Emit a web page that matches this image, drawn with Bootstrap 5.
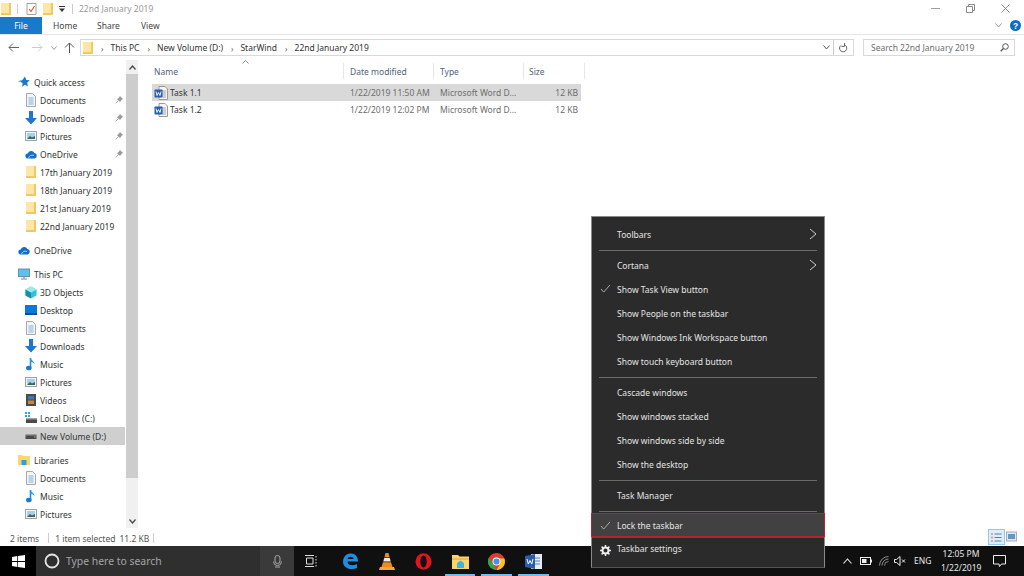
<!DOCTYPE html>
<html lang="en">
<head>
<meta charset="utf-8">
<title>22nd January 2019</title>
<link rel="stylesheet" href="https://cdn.jsdelivr.net/npm/bootstrap@5.3.0/dist/css/bootstrap.min.css">
<style>
html,body{height:576px;overflow:hidden}
body{font-family:"Noto Sans","Open Sans","Liberation Sans",sans-serif;font-size:8.5px;line-height:1;color:#333;background:#fff;width:1024px}
svg{display:block;flex:none}
.defs-holder{position:absolute;width:0;height:0}
.shell{height:576px}
.titlebar{height:17px;padding-left:1px}
.titletext{color:#9a9a9a;margin-left:6px}
.vsep{width:1px;height:10px;background:#ccc}
.vsep-tall{height:15px;margin:0 3px 0 3px}
.mark-l6{margin-left:6px}
.mark-l7{margin-left:7px}
.mark-l8{margin-left:8px}
.mark-l12{margin-left:12px}
.winbtn{width:35px}
.winbtn.lastwin{width:23px}
.tabstrip{height:18px;border-bottom:1px solid #e6e6e6}
.tabfile{width:42px;height:17px;background:#1979ca;color:#fff;justify-content:center}
.tabitem{color:#444;margin-left:11px;width:33px}
.tabright{margin-right:3px}
.addr{height:25px}
.navzone{width:80px;padding-left:8px}
.addrbox{height:17px;width:774px;border:1px solid #d9d9d9;padding-left:2px;color:#333}
.crumb{color:#666;font-size:8px;margin:0 7px 0 8px}
.refresh{margin:0 5px 0 2px}
.searchbox{height:17px;width:152px;border:1px solid #d9d9d9;margin-left:9px;margin-right:9px;padding:0 5px 0 7px;color:#6d6d6d}
.content{height:470px;min-height:0}
.sidenav{width:126px;padding-top:13px;overflow:hidden}
.navrow{height:18px;gap:4px;color:#333;padding-left:18px}
.navrow.kid{padding-left:25px;gap:3px}
.navrow.gap{margin-top:6px}
.navrow.cur{background:#cfcfcf;margin-right:1px}
.pin{position:absolute;left:115px;top:5px}
.sbar{width:12px;background:#f0f0f0;height:468px}
.sbthumb{height:404px;background:#cdcdcd}
.sbend{height:14px}
.filepane{width:886px;padding-left:14px}
.colgrid{display:grid;grid-template-columns:192px 90px 90px 57px;width:429px}
.headrow{height:24px;padding-top:3px;color:#51627a;position:relative}
.headcell{height:16px;padding-left:6px;border-right:1px solid #e5e5e5}
.headcell.firsth{padding-left:2px}
.headcell.lastc{width:61px;padding-left:5px}
.sortmark{position:absolute;left:90px;top:0}
.filerow{height:17px;color:#6d6d6d}
.filerow.sel{background:#d9d9d9}
.fname{color:#333;gap:2px;padding-left:2px}
.fcell{padding-left:6px}
.fsize{justify-content:flex-end;padding-right:3px}
.statusline{height:16px;color:#555;padding-left:10px;position:relative}
.statsep{margin:0 6px 0 9px}
.viewbtn{position:absolute;top:-1px;height:16px;width:17px;border:1px solid #8fcbee;background:#d9effb;left:988px;display:flex;align-items:center;justify-content:center}
.viewbtn2{position:absolute;top:1px;left:1006px}
.taskstrip{height:30px;background:#101010;color:#eee;position:relative}
.startcell{width:36px;height:30px;background:#000;justify-content:center}
.searchcell{width:258px;height:30px;background:#2f2f2f;padding-left:8px;color:#a5a5a5;font-size:10.4px;gap:6px}
.micbox{margin-left:auto;width:34px;height:30px;background:#3a3a3a;justify-content:center}
.appcell{width:36.6px;height:30px;justify-content:center;position:relative}
.appcell.tview{width:34px}
.appgap{width:4px}
.running::after{content:"";position:absolute;left:3px;right:3px;bottom:0;height:2px;background:#76b9ed}
.tray{margin-left:auto;height:30px;color:#e8e8e8}
.tr-chev{margin-right:8px}
.tr-batt{margin-right:7px}
.tr-wifi{margin-right:4px}
.tr-vol{margin-right:8px}
.tr-eng{width:19px;margin-right:8px}
.clock{text-align:center;line-height:14px;width:40px}
.tr-note{margin:0 18px 0 12px}
.ctxmenu{position:absolute;left:591px;top:216px;width:234px;height:352px;background:#2b2b2b;border:1px solid #8a8a8a;border-bottom-color:#555;padding:5px 0 0;color:#e4e4e4;z-index:5}
.ctxrow{height:24px;padding-left:25px;position:relative}
.ctxrow svg.lead{position:absolute;left:8px;top:7px}
.ctxrow svg.arrow{position:absolute;right:7px;top:6px}
.ctxsep{height:7px;padding:4px 7px 2px 7px}
.ctxsep.shortsep{height:6px;padding-bottom:1px}
.ctxsep i{display:block;height:1px;background:#6a6a6a}
.ctxrow.lockrow{background:#414141;box-shadow:inset 0 0 0 1px #b4232f;height:24px;margin:0 -1px;padding-left:26px}
.ctxrow.lockrow svg.lead{left:9px;top:8px}
.ctxrow.afterlock{box-shadow:0 -1px 0 #b4232f;margin-top:1px;height:23px}
/* Noto Sans at 8.5px rounds its ascent down: drop the text one pixel back onto the row's centre line */
.navrow>span,.fname>span,.fcell,.fsize,.headcell,.ctxrow,.tabfile,.tabitem,.titletext,.addrbox>span:not(.ms-auto),.searchbox>span,.statusline>.stattext{padding-top:2px}
.ctxrow.afterlock{padding-top:0}
</style>
</head>
<body>
<svg class="defs-holder" width="0" height="0">
<defs>
<symbol id="folder" viewBox="0 0 10 12"><path d="M0 0h10v12H0z" fill="#fbe199"/><path d="M0 0h8v10H0z" fill="#fde6a6"/><path d="M8 0h2v12H0v-2h8z" fill="#f3c95f"/></symbol>
<symbol id="doc" viewBox="0 0 12 14"><path d="M1.500.5h6l3 3v10h-9z" fill="#f2f4f6" stroke="#a8a8a8"/><path d="M3.500 5h5M3.500 7h5M3.500 9h5M3.500 11h5" stroke="#7fb4dc"/></symbol>
<symbol id="down" viewBox="0 0 12 14"><path d="M4 0h4v7h4L6 13.500 0 7h4z" fill="#1a78d1"/></symbol>
<symbol id="pic" viewBox="0 0 12 12"><rect x=".5" y="1.500" width="11" height="9" fill="#f3f6f8" stroke="#9aa3ab"/><rect x="2" y="3" width="8" height="6" fill="#a9d0ea"/><path d="M2 9l3-3 2 1.500L10 6v3z" fill="#3a6a54"/></symbol>
<symbol id="cloud" viewBox="0 0 12 9"><path d="M3 8.500a2.500 2.500 0 0 1-.3-5A3.600 3.600 0 0 1 9.400 3a2.800 2.800 0 0 1 .2 5.500z" fill="#0f6fc9"/><path d="M3.500 8c1-2.500 3-3.500 5.500-2.500" fill="none" stroke="#fff" stroke-width=".7"/></symbol>
<symbol id="pinico" viewBox="0 0 8 8"><path d="M5 .5L7.500 3 6.300 3.600 5 5.500 2.500 3 4.400 1.700zM3.500 4.500L.7 7.300" fill="#9a9a9a" stroke="#8a8a8a" stroke-width=".7"/></symbol>
<symbol id="music" viewBox="0 0 12 14"><path d="M5.500 1v9.500" stroke="#1a8fe3" stroke-width="1.600"/><ellipse cx="3.800" cy="11" rx="2.800" ry="2.300" fill="#1a78d1"/><path d="M5.500 1c1 3 4.500 3 3.800 6.500C9 5.500 7 5 5.500 5z" fill="#2b9fef"/></symbol>
<symbol id="drive" viewBox="0 0 12 8"><rect x=".5" y="3" width="11" height="4" fill="#4a4a4a"/><rect x=".5" y="2" width="11" height="1.500" fill="#9a9a9a"/><rect x="9" y="4.500" width="1.500" height="1" fill="#8fd14f"/></symbol>
<symbol id="wordfile" viewBox="0 0 14 14"><path d="M5 .5h6l2.500 2.500v10.500H5z" fill="#f4f4f4" stroke="#9a9a9a"/><path d="M8 5h4M8 7h4M8 9h4M8 11h4" stroke="#a8a8a8"/><rect x=".5" y="3.500" width="8" height="8" rx=".7" fill="#2b5ea8"/><path d="M2 5.500l1 4 1.500-3 1.500 3 1-4" fill="none" stroke="#fff" stroke-width=".9"/></symbol>
<symbol id="check" viewBox="0 0 12 10"><path d="M1 5.500L4 9l7-8" fill="none" stroke="#b9b9b9"/></symbol>
<symbol id="chev" viewBox="0 0 8 12"><path d="M1 1l6 5-6 5" fill="none" stroke="#cfcfcf" stroke-width="1"/></symbol>
</defs>
</svg>
<div class="shell d-flex flex-column">
  <div class="titlebar d-flex align-items-center">
    <svg width="10" height="12"><use href="#folder"/></svg>
    <span class="vsep mark-l6"></span>
    <svg class="mark-l8" width="11" height="12" viewBox="0 0 11 12"><path d="M1 .5h9v11H1z" fill="#fff" stroke="#a0a0a0"/><path d="M3 6l2 2.500L8.500 3" fill="none" stroke="#e0592a" stroke-width="1.200"/></svg>
    <svg class="mark-l6" width="10" height="12"><use href="#folder"/></svg>
    <svg class="mark-l6" width="6" height="6" viewBox="0 0 6 6"><path d="M0 0h6v1H0zM0 2.500h6L3 6z" fill="#333"/></svg>
    <span class="vsep mark-l7"></span>
    <span class="titletext">22nd January 2019</span>
    <span class="ms-auto d-flex align-items-center">
      <span class="winbtn"><svg width="9" height="9" viewBox="0 0 9 9"><path d="M0 4.500h9" stroke="#a0a0a0"/></svg></span>
      <span class="winbtn"><svg width="9" height="9" viewBox="0 0 9 9"><path d="M.5 2.500h6v6h-6zM2.500 2.500v-2h6v6h-2" fill="none" stroke="#8a8a8a"/></svg></span>
      <span class="winbtn lastwin"><svg width="9" height="9" viewBox="0 0 9 9"><path d="M.5.500l8 8M8.500.500l-8 8" stroke="#8a8a8a"/></svg></span>
    </span>
  </div>
  <div class="tabstrip d-flex align-items-start">
    <span class="tabfile d-flex align-items-center">File</span>
    <span class="tabitem align-self-center">Home</span>
    <span class="tabitem align-self-center">Share</span>
    <span class="tabitem align-self-center">View</span>
    <span class="tabright ms-auto d-flex align-items-center gap-2 align-self-center">
      <svg width="7" height="5" viewBox="0 0 7 5"><path d="M.5.500L3.500 4l3-3.500" fill="none" stroke="#999"/></svg>
      <svg width="11" height="11" viewBox="0 0 11 11"><circle cx="5.500" cy="5.500" r="5.500" fill="#0f6cc4"/><text x="5.500" y="8.500" font-size="8.500" font-weight="700" text-anchor="middle" fill="#fff" font-family="Liberation Sans">?</text></svg>
    </span>
  </div>
  <div class="addr d-flex align-items-center">
    <div class="navzone d-flex align-items-center">
      <svg width="12" height="9" viewBox="0 0 12 9"><path d="M11 4.500H1M5 .5l-4 4 4 4" fill="none" stroke="#666"/></svg>
      <svg class="mark-l12" width="11" height="9" viewBox="0 0 11 9"><path d="M0 4.500h10M6 .5l4 4-4 4" fill="none" stroke="#ccc"/></svg>
      <svg class="mark-l8" width="6" height="4" viewBox="0 0 6 4"><path d="M.5.500L3 3.500 5.500.5" fill="none" stroke="#999"/></svg>
      <svg class="mark-l7" width="11" height="11" viewBox="0 0 11 11"><path d="M5.500 11V1M1 5.500l4.500-4.500 4.500 4.500" fill="none" stroke="#555"/></svg>
    </div>
    <div class="addrbox d-flex align-items-center">
      <svg width="10" height="12"><use href="#folder"/></svg>
      <span class="crumb">&rsaquo;</span><span>This PC</span>
      <span class="crumb">&rsaquo;</span><span>New Volume (D:)</span>
      <span class="crumb">&rsaquo;</span><span>StarWind</span>
      <span class="crumb">&rsaquo;</span><span>22nd January 2019</span>
      <span class="ms-auto d-flex align-items-center h-100">
        <svg width="7" height="5" viewBox="0 0 7 5"><path d="M.5.500L3.500 4l3-3.500" fill="none" stroke="#555"/></svg>
        <span class="vsep vsep-tall"></span>
        <svg class="refresh" width="9" height="10" viewBox="0 0 9 10"><path d="M2 2.300A3.600 3.600 0 1 0 5 1.700" fill="none" stroke="#666"/><path d="M5.500 0v3.400H2.500" fill="none" stroke="#666"/></svg>
      </span>
    </div>
    <div class="searchbox d-flex align-items-center justify-content-between">
      <span>Search 22nd January 2019</span>
      <svg width="9" height="9" viewBox="0 0 9 9"><circle cx="5.500" cy="3.500" r="2.800" fill="none" stroke="#555"/><path d="M3.500 5.500L.7 8.300" stroke="#555" stroke-width="1.300"/></svg>
    </div>
  </div>
  <div class="content d-flex">
    <nav class="sidenav">
      <div class="navrow d-flex align-items-center"><svg width="12" height="12" viewBox="0 0 12 12"><path d="M7 .5l1.300 3.400 3.500.4-2.600 2.400.7 3.700L7 8.700l-3 2.100.7-3.400L2.500 5.500 0 6l1.500-1.300 2.700-.5z" fill="#1a78d1"/></svg><span>Quick access</span></div>
      <div class="navrow kid d-flex align-items-center position-relative"><svg width="12" height="14"><use href="#doc"/></svg><span>Documents</span><svg class="pin" width="8" height="8"><use href="#pinico"/></svg></div>
      <div class="navrow kid d-flex align-items-center position-relative"><svg width="12" height="14"><use href="#down"/></svg><span>Downloads</span><svg class="pin" width="8" height="8"><use href="#pinico"/></svg></div>
      <div class="navrow kid d-flex align-items-center position-relative"><svg width="12" height="12"><use href="#pic"/></svg><span>Pictures</span><svg class="pin" width="8" height="8"><use href="#pinico"/></svg></div>
      <div class="navrow kid d-flex align-items-center position-relative"><svg width="12" height="9"><use href="#cloud"/></svg><span>OneDrive</span><svg class="pin" width="8" height="8"><use href="#pinico"/></svg></div>
      <div class="navrow kid d-flex align-items-center"><svg width="12" height="12"><use href="#folder"/></svg><span>17th January 2019</span></div>
      <div class="navrow kid d-flex align-items-center"><svg width="12" height="12"><use href="#folder"/></svg><span>18th January 2019</span></div>
      <div class="navrow kid d-flex align-items-center"><svg width="12" height="12"><use href="#folder"/></svg><span>21st January 2019</span></div>
      <div class="navrow kid d-flex align-items-center"><svg width="12" height="12"><use href="#folder"/></svg><span>22nd January 2019</span></div>
      <div class="navrow gap d-flex align-items-center"><svg width="12" height="9"><use href="#cloud"/></svg><span>OneDrive</span></div>
      <div class="navrow gap d-flex align-items-center"><svg width="12" height="12" viewBox="0 0 12 12"><rect x=".5" y="1" width="11" height="7.500" fill="#5cc0f0" stroke="#6b8fa8"/><path d="M3 11h6M6 8.500V11" stroke="#7a8a96"/></svg><span>This PC</span></div>
      <div class="navrow kid d-flex align-items-center"><svg width="12" height="13" viewBox="0 0 12 13"><path d="M6 .5l5.500 3v6L6 12.500.5 9.500v-6z" fill="#2ec4d6"/><path d="M6 6.500v6L.5 9.500v-6z" fill="#1a8f9f"/><path d="M6 .5l5.500 3L6 6.500.5 3.500z" fill="#9ee8ee"/></svg><span>3D Objects</span></div>
      <div class="navrow kid d-flex align-items-center"><svg width="12" height="10" viewBox="0 0 12 10"><rect width="12" height="9" fill="#0f78d4"/><rect y="8" width="12" height="2" fill="#0a4f8f"/></svg><span>Desktop</span></div>
      <div class="navrow kid d-flex align-items-center"><svg width="12" height="14"><use href="#doc"/></svg><span>Documents</span></div>
      <div class="navrow kid d-flex align-items-center"><svg width="12" height="14"><use href="#down"/></svg><span>Downloads</span></div>
      <div class="navrow kid d-flex align-items-center"><svg width="12" height="14"><use href="#music"/></svg><span>Music</span></div>
      <div class="navrow kid d-flex align-items-center"><svg width="12" height="12"><use href="#pic"/></svg><span>Pictures</span></div>
      <div class="navrow kid d-flex align-items-center"><svg width="12" height="12" viewBox="0 0 12 12"><rect x="1" width="10" height="12" fill="#4a4a4a"/><rect x="3" y="2" width="6" height="3.500" fill="#3a78b8"/><rect x="3" y="6.500" width="6" height="3.500" fill="#c98a2a"/></svg><span>Videos</span></div>
      <div class="navrow kid d-flex align-items-center"><svg width="12" height="12" viewBox="0 0 12 12"><path d="M0 0h2v2H0zM3 0h2v2H3zM0 3h2v2H0zM3 3h2v2H3z" fill="#27a9e0"/><rect x="1" y="7" width="11" height="4" fill="#4a4a4a"/><rect x="1" y="6" width="11" height="1.500" fill="#a0a0a0"/></svg><span>Local Disk (C:)</span></div>
      <div class="navrow kid cur d-flex align-items-center"><svg width="12" height="8"><use href="#drive"/></svg><span>New Volume (D:)</span></div>
      <div class="navrow gap d-flex align-items-center"><svg width="12" height="12" viewBox="0 0 12 12"><path d="M0 1h4l1 1h7v9H0z" fill="#fcd667"/><rect x="3.500" y="6" width="5" height="5" fill="#2b9fe0"/></svg><span>Libraries</span></div>
      <div class="navrow kid d-flex align-items-center"><svg width="12" height="14"><use href="#doc"/></svg><span>Documents</span></div>
      <div class="navrow kid d-flex align-items-center"><svg width="12" height="14"><use href="#music"/></svg><span>Music</span></div>
      <div class="navrow kid d-flex align-items-center"><svg width="12" height="12"><use href="#pic"/></svg><span>Pictures</span></div>
    </nav>
    <div class="sbar d-flex flex-column">
      <div class="sbend d-flex align-items-center justify-content-center"><svg width="7" height="5" viewBox="0 0 7 5"><path d="M.5 4.500L3.500 1l3 3.500" fill="none" stroke="#444" stroke-width="1.200"/></svg></div>
      <div class="sbthumb"></div>
      <div class="flex-grow-1"></div>
      <div class="sbend d-flex align-items-center justify-content-center"><svg width="7" height="5" viewBox="0 0 7 5"><path d="M.5.500L3.500 4l3-3.500" fill="none" stroke="#444" stroke-width="1.200"/></svg></div>
    </div>
    <div class="filepane">
      <div class="headrow colgrid">
        <svg class="sortmark" width="7" height="4" viewBox="0 0 7 4"><path d="M.5 3.500L3.500.5l3 3" fill="none" stroke="#8a8a8a"/></svg>
        <div class="headcell firsth d-flex align-items-center">Name</div>
        <div class="headcell d-flex align-items-center">Date modified</div>
        <div class="headcell d-flex align-items-center">Type</div>
        <div class="headcell lastc d-flex align-items-center">Size</div>
      </div>
      <div class="filerow sel colgrid align-items-center">
        <div class="fname d-flex align-items-center"><svg width="14" height="14"><use href="#wordfile"/></svg><span>Task 1.1</span></div>
        <div class="fcell">1/22/2019 11:50 AM</div>
        <div class="fcell">Microsoft Word D...</div>
        <div class="fsize d-flex">12 KB</div>
      </div>
      <div class="filerow colgrid align-items-center">
        <div class="fname d-flex align-items-center"><svg width="14" height="14"><use href="#wordfile"/></svg><span>Task 1.2</span></div>
        <div class="fcell">1/22/2019 12:02 PM</div>
        <div class="fcell">Microsoft Word D...</div>
        <div class="fsize d-flex">12 KB</div>
      </div>
    </div>
  </div>
  <div class="statusline d-flex align-items-center">
    <span class="stattext">2 items</span>
    <span class="vsep statsep"></span>
    <span class="stattext">1 item selected</span>
    <span class="stattext ms-1">11.2 KB</span>
    <span class="vsep ms-1"></span>
    <span class="viewbtn"><svg width="13" height="11" viewBox="0 0 13 11"><path d="M1 1h2v2H1zM1 4.500h2v2H1zM1 8h2v2H1z" fill="#e8a0a0"/><path d="M4.500 2h7M4.500 5.500h7M4.500 9h7" stroke="#6a7a88"/></svg></span>
    <span class="viewbtn2"><svg width="11" height="11" viewBox="0 0 11 11"><rect x=".5" y="1" width="10" height="9" fill="#e6e6e6" stroke="#aab"/><rect x="2" y="3" width="7" height="5" fill="#5a9ac8"/></svg></span>
  </div>
  <div class="taskstrip d-flex align-items-center">
    <div class="startcell d-flex align-items-center"><svg width="13" height="13" viewBox="0 0 13 13"><path d="M0 1.900l5.300-.8v5H0zM6 1l7-1v6.100H6zM0 6.900h5.300v5L0 11.100zM6 6.900h7V13l-7-1z" fill="#fff"/></svg></div>
    <div class="searchcell d-flex align-items-center">
      <svg width="16" height="16" viewBox="0 0 16 16"><circle cx="8" cy="8" r="6.500" fill="none" stroke="#e6e6e6" stroke-width="1.800"/></svg>
      <span>Type here to search</span>
      <span class="micbox d-flex align-items-center"><svg width="9" height="13" viewBox="0 0 9 13"><rect x="2" y=".5" width="5" height="8" rx="2.500" fill="none" stroke="#a8a8a8"/><path d="M.5 6.500a4 4 0 0 0 8 0M2 12h5" fill="none" stroke="#a8a8a8"/></svg></span>
    </div>
    <div class="appcell tview d-flex align-items-center"><svg width="12" height="12" viewBox="0 0 12 12"><path d="M1.500 3h6.500v6H1.500zM0 .5h9M0 11.500h9M11 1v1.500M11 4v1.500M11 7v1.500M11 10v1.500" fill="none" stroke="#ddd"/></svg></div>
    <div class="appgap"></div>
    <div class="appcell d-flex align-items-center"><svg width="17" height="17" viewBox="0 0 17 17"><path d="M1 9C1 3 5 .5 9 .5c4.500 0 7 3.500 7 8H5.500c0 4 5.500 5 9.500 2.500v4c-5 2.500-14 1-14-6.500zM5.500 6h6c0-3-5.500-3-6 0z" fill="#1a8fe3"/></svg></div>
    <div class="appcell d-flex align-items-center"><svg width="16" height="17" viewBox="0 0 16 17"><path d="M6.500 0h3l1 4h-5z" fill="#f08a1d"/><path d="M5.300 4.800h5.400l1 3.700H4.300z" fill="#eee"/><path d="M4 9.200h8l1.500 4.800h-11z" fill="#f08a1d"/><path d="M1 14h14l1 3H0z" fill="#f4a53a"/></svg></div>
    <div class="appcell d-flex align-items-center"><svg width="17" height="17" viewBox="0 0 17 17"><ellipse cx="8.500" cy="8.500" rx="8" ry="8.300" fill="#e0141c"/><ellipse cx="8.500" cy="8.500" rx="3.200" ry="6" fill="#101010"/></svg></div>
    <div class="appcell running d-flex align-items-center"><svg width="17" height="15" viewBox="0 0 17 15"><path d="M0 1h6l1.500 1.500H17V15H0z" fill="#fcd667"/><path d="M0 4h17v2H0z" fill="#e8bd52"/><path d="M5 9l3.500-2.500L12 9v5H5z" fill="#3db4e6"/></svg></div>
    <div class="appcell running d-flex align-items-center"><svg width="17" height="17" viewBox="0 0 17 17"><circle cx="8.500" cy="8.500" r="8.500" fill="#dc3d33"/><path d="M8.500 17a8.500 8.500 0 0 1-7.400-12.700L5 11z" fill="#30a64a"/><path d="M8.500 17A8.500 8.500 0 0 0 16.400 5.500H8.500L11.500 12z" fill="#f9c31a"/><circle cx="8.500" cy="8.500" r="4" fill="#fff"/><circle cx="8.500" cy="8.500" r="3.100" fill="#4b8cf0"/></svg></div>
    <div class="appcell running d-flex align-items-center"><svg width="17" height="15" viewBox="0 0 17 15"><path d="M6 0h11v15H6z" fill="#e6edf6"/><path d="M9 4h6M9 7h6M9 10h6" stroke="#5a82b8"/><path d="M0 2l10-2v15L0 13z" fill="#2b5ea8"/><path d="M2 5l1.300 5 1.700-3.500L6.700 10 8 5" fill="none" stroke="#fff"/></svg></div>
    <div class="tray d-flex align-items-center">
      <svg class="tr-chev" width="9" height="6" viewBox="0 0 9 6"><path d="M.5 5.500l4-4.500 4 4.500" fill="none" stroke="#eee" stroke-width="1.100"/></svg>
      <svg class="tr-batt" width="12" height="8" viewBox="0 0 12 8"><rect x=".5" y=".5" width="10" height="7" fill="none" stroke="#eee"/><rect x="2" y="2" width="4.500" height="4" fill="#eee"/><path d="M11 2.500h1v3h-1z" fill="#eee"/></svg>
      <svg class="tr-wifi" width="11" height="10" viewBox="0 0 11 10"><path d="M.5 9.500A9 9 0 0 1 9.500.5M3 9.500A6.500 6.500 0 0 1 9.500 3M5.500 9.500a4 4 0 0 1 4-4" fill="none" stroke="#8a8a8a"/></svg>
      <svg class="tr-vol" width="12" height="10" viewBox="0 0 12 10"><path d="M.5 3.500h2L6 .5v9L2.500 6.500h-2z" fill="none" stroke="#eee"/><path d="M8 3.500l3 3M11 3.500l-3 3" stroke="#eee"/></svg>
      <span class="tr-eng">ENG</span>
      <div class="clock"><div>12:05 PM</div><div>1/22/2019</div></div>
      <svg class="tr-note" width="13" height="12" viewBox="0 0 13 12"><path d="M.5.500h12v8.500H8.500L6.500 11.500 6 9H.5z" fill="none" stroke="#eee"/></svg>
    </div>
  </div>
</div>
<div class="ctxmenu">
  <div class="ctxrow d-flex align-items-center">Toolbars<svg class="arrow" width="8" height="12"><use href="#chev"/></svg></div>
  <div class="ctxsep"><i></i></div>
  <div class="ctxrow d-flex align-items-center">Cortana<svg class="arrow" width="8" height="12"><use href="#chev"/></svg></div>
  <div class="ctxrow d-flex align-items-center"><svg class="lead" width="11" height="9"><use href="#check"/></svg>Show Task View button</div>
  <div class="ctxrow d-flex align-items-center">Show People on the taskbar</div>
  <div class="ctxrow d-flex align-items-center">Show Windows Ink Workspace button</div>
  <div class="ctxrow d-flex align-items-center">Show touch keyboard button</div>
  <div class="ctxsep"><i></i></div>
  <div class="ctxrow d-flex align-items-center">Cascade windows</div>
  <div class="ctxrow d-flex align-items-center">Show windows stacked</div>
  <div class="ctxrow d-flex align-items-center">Show windows side by side</div>
  <div class="ctxrow d-flex align-items-center">Show the desktop</div>
  <div class="ctxsep"><i></i></div>
  <div class="ctxrow d-flex align-items-center">Task Manager</div>
  <div class="ctxsep shortsep"><i></i></div>
  <div class="ctxrow lockrow d-flex align-items-center"><svg class="lead" width="11" height="9"><use href="#check"/></svg>Lock the taskbar</div>
  <div class="ctxrow afterlock d-flex align-items-center"><svg class="lead" width="11" height="11" viewBox="0 0 11 11"><circle cx="5.500" cy="5.500" r="3" fill="none" stroke="#eee" stroke-width="2"/><path d="M5.500 0v2M5.500 9v2M0 5.500h2M9 5.500h2M1.600 1.600L3 3M8 8l1.400 1.400M9.400 1.600L8 3M3 8L1.600 9.400" stroke="#eee" stroke-width="1.500"/></svg>Taskbar settings</div>
</div>
<script src="https://cdn.jsdelivr.net/npm/bootstrap@5.3.0/dist/js/bootstrap.bundle.min.js"></script>
</body>
</html>
